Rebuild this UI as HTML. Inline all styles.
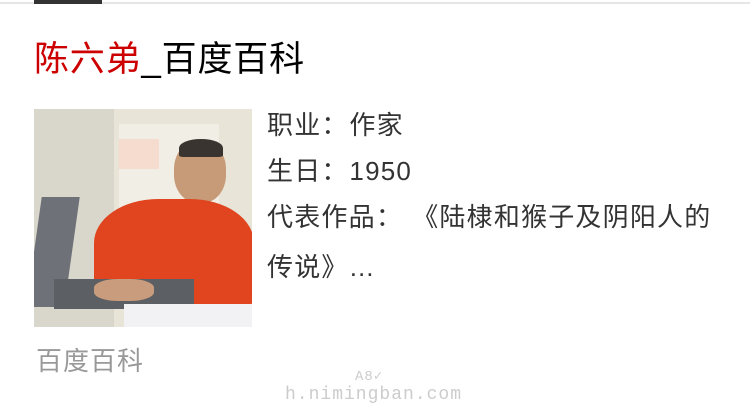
<!DOCTYPE html>
<html><head><meta charset="utf-8"><style>
body{margin:0;width:750px;height:411px;background:#fff;position:relative;overflow:hidden;font-family:"Liberation Sans","Noto Sans CJK SC",sans-serif}
.top{position:absolute;left:0;top:2px;width:750px;height:2px;background:#e6e6e6}
.topd{position:absolute;left:34px;top:0;width:68px;height:4px;background:#333}
.title{position:absolute;left:34px;top:38px;font-size:35px;line-height:44px;color:#000;white-space:nowrap;letter-spacing:0.8px}
.title span{color:#c00}
.ph{position:absolute;left:34px;top:109px;width:218px;height:218px;background:#e9e4d8;overflow:hidden}
.t{position:absolute;left:267px;font-size:26px;color:#333;white-space:nowrap;line-height:34px;letter-spacing:1.2px}
.c{display:inline-block;width:28px}
.src{position:absolute;left:36px;top:344px;font-size:26px;color:#999;line-height:34px;letter-spacing:1px}
.wm{position:absolute;left:285px;top:368px;font-size:18px;color:#ccc;font-family:"Liberation Mono",monospace;letter-spacing:1px}
</style></head><body>
<div class="top"></div><div class="topd"></div>
<div class="title"><span>陈六弟</span>_百度百科</div>
<div class="ph">
<div style="position:absolute;left:0;top:0;width:80px;height:218px;background:#d9d6cc"></div>
<div style="position:absolute;left:85px;top:15px;width:100px;height:160px;background:#f1eee6"></div>
<div style="position:absolute;left:85px;top:30px;width:40px;height:30px;background:#f5dccf"></div>
<div style="position:absolute;left:140px;top:32px;width:52px;height:62px;background:#c79a78;border-radius:45%"></div>
<div style="position:absolute;left:145px;top:30px;width:44px;height:18px;background:#3a3430;border-radius:50% 50% 10% 10%"></div>
<div style="position:absolute;left:60px;top:90px;width:160px;height:110px;background:#e0451f;border-radius:40% 40% 10% 10%"></div>
<div style="position:absolute;left:0;top:88px;width:38px;height:110px;background:#6e7177;transform:skewX(-8deg)"></div>
<div style="position:absolute;left:20px;top:170px;width:140px;height:30px;background:#5c5f64"></div>
<div style="position:absolute;left:60px;top:170px;width:60px;height:22px;background:#c89c7c;border-radius:40%"></div>
<div style="position:absolute;left:90px;top:195px;width:128px;height:23px;background:#f2f2f4"></div>
</div>
<div class="t" style="top:108px">职业<span class="c">：</span>作家</div>
<div class="t" style="top:154px">生日<span class="c">：</span>1950</div>
<div class="t" style="top:200px">代表作品<span class="c">：</span> 《陆棣和猴子及阴阳人的</div>
<div class="t" style="top:250px">传说》…</div>
<div class="src">百度百科</div>
<div class="wm"><div style="padding-left:70px;font-size:14px">A8✓</div>h.nimingban.com</div>
</body></html>
